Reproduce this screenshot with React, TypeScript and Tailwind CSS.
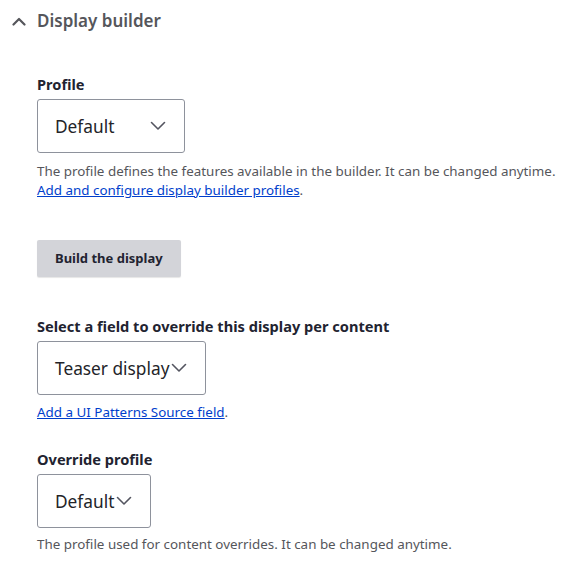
import React from "react";

const Chevron = ({ className = "" }: { className?: string }) => (
  <svg className={className} width="16" height="10" viewBox="0 0 16 10" fill="none">
    <path d="M1.5 1.5 L8 8 L14.5 1.5" stroke="#545560" strokeWidth="1.6" strokeLinecap="round" strokeLinejoin="round" />
  </svg>
);

const Select = ({ text, width }: { text: string; width?: string }) => (
  <div className={`flex h-[54px] items-center rounded-[3px] border border-[#8e929c] bg-white pl-[17px] pr-[18px] ${width ?? ""}`}>
    <span className="pt-[2px] text-[17.3px] text-[#232429]">{text}</span>
    <span className="flex-1" />
    <Chevron className="ml-[2px]" />
  </div>
);

export default function App() {
  return (
    <div className="min-h-[571px] w-[576px] bg-white font-['Noto_Sans',sans-serif] text-[#222330]">
      <div className="flex items-center pl-[12px] pt-[9px]">
        <svg width="14" height="9" viewBox="0 0 14 9" fill="none">
          <path d="M1.5 7.5 L7 2 L12.5 7.5" stroke="#55565b" strokeWidth="2.2" strokeLinecap="round" strokeLinejoin="round" />
        </svg>
        <span className="ml-[11px] text-[17px] font-semibold leading-[24px] text-[#55565b]">Display builder</span>
      </div>

      <div className="pl-[37px] pt-[41px]">
        <div className="text-[14.6px] font-bold leading-[20px]">Profile</div>
        <div className="mt-[5px] inline-flex">
          <Select text="Default" width="w-[148px]" />
        </div>
        <div className="mt-[9px] text-[13.4px] leading-[19px] text-[#55565b]">
          The profile defines the features available in the builder. It can be changed anytime.
          <br />
          <a href="#" className="text-[#003ecc] underline">Add and configure display builder profiles</a>.
        </div>

        <div className="mt-[40px]">
          <button className="h-[37px] rounded-[2px] bg-[#d3d4d9] px-[18px] text-[13px] font-bold text-[#222330] shadow-[0_1px_1px_rgba(0,0,0,0.1)]">
            Build the display
          </button>
        </div>

        <div className="mt-[39px] text-[14.6px] font-bold leading-[20px]">Select a field to override this display per content</div>
        <div className="mt-[5px] inline-flex">
          <Select text="Teaser display" />
        </div>
        <div className="mt-[8px] text-[13.4px] leading-[19px] text-[#55565b]">
          <a href="#" className="text-[#003ecc] underline">Add a UI Patterns Source field</a>.
        </div>

        <div className="mt-[27px] text-[14.6px] font-bold leading-[20px]">Override profile</div>
        <div className="mt-[5px] inline-flex">
          <Select text="Default" />
        </div>
        <div className="mt-[7px] text-[13.4px] leading-[19px] text-[#55565b]">
          The profile used for content overrides. It can be changed anytime.
        </div>
      </div>
    </div>
  );
}
